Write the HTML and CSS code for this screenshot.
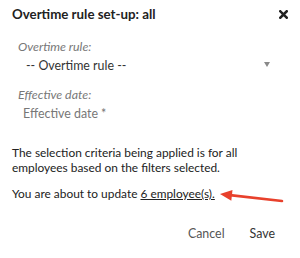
FILE: index.html
```html
<!DOCTYPE html>
<html>
<head>
<meta charset="utf-8">
<link rel="stylesheet" href="styles.css">
</head>
<body>
<div class="dialog">
  <div class="header">
    <h1 class="title">Overtime rule set-up: all</h1>
    <svg class="close" width="9" height="9" viewBox="0 0 9 9">
      <path d="M1.3 1.3 L7.7 7.7 M7.7 1.3 L1.3 7.7" stroke="#222" stroke-width="2.6" stroke-linecap="square"/>
    </svg>
  </div>
  <div class="field">
    <div class="label">Overtime rule:</div>
    <div class="select">
      <span>-- Overtime rule --</span>
      <svg class="caret" width="6" height="5" viewBox="0 0 6 5"><polygon points="0,0 6,0 3,5" fill="#8a8a8a"/></svg>
    </div>
  </div>
  <div class="field">
    <div class="label second">Effective date:</div>
    <div class="input">Effective date *</div>
  </div>
  <p class="text">The selection criteria being applied is for all employees based on the filters selected.</p>
  <p class="text update">You are about to update <a class="link">6 employee(s).</a></p>
  <div class="actions">
    <button class="btn cancel">Cancel</button>
    <button class="btn save">Save</button>
  </div>
  <svg class="arrow" width="68" height="20" viewBox="0 0 68 20">
    <line x1="12" y1="9.1" x2="64" y2="15" stroke="#e8412c" stroke-width="2.6" stroke-linecap="round"/>
    <polygon points="2,8 14.5,3.9 13.3,14.8" fill="#e8412c"/>
  </svg>
</div>
</body>
</html>
```
FILE: styles.css
```css
* { box-sizing: border-box; }
html, body { margin: 0; padding: 0; background: #fff; }
body { font-family: Lato, "Open Sans", sans-serif; color: #222; width: 300px; height: 258px; overflow: hidden; font-size: 12.4px; }
.dialog { position: relative; padding: 6px 12px 0 12px; }
.header { display: flex; justify-content: space-between; align-items: center; height: 17px; }
.title { margin: 0; font-size: 13.3px; line-height: 17px; font-weight: 700; color: #222; }
.close { margin-right: 0; margin-top: -1px; }
.field { padding-left: 6px; }
.label { font-style: italic; color: #777; margin-top: 15.5px; line-height: 15px; }
.label.second { margin-top: 14px; }
.select { display: flex; justify-content: space-between; align-items: center; color: #333; padding: 4px 18px 0 8px; line-height: 15px; }
.caret { margin-top: -2px; }
.input { color: #777; padding: 4px 0 0 5px; line-height: 15px; }
.text { margin: 0; line-height: 15px; color: #222; font-size: 11.9px; }
.field + .text { margin-top: 24px; }
.update { margin-top: 11px; }
.link { color: #222; text-decoration: underline; }
.actions { display: flex; justify-content: flex-end; margin-top: 25px; padding-right: 13px; }
.btn { background: none; border: none; font-family: inherit; font-size: 12.4px; line-height: 15px; padding: 0; }
.cancel { color: #555; margin-right: 25px; }
.save { color: #333; }
.arrow { position: absolute; left: 218px; top: 186px; }
```
